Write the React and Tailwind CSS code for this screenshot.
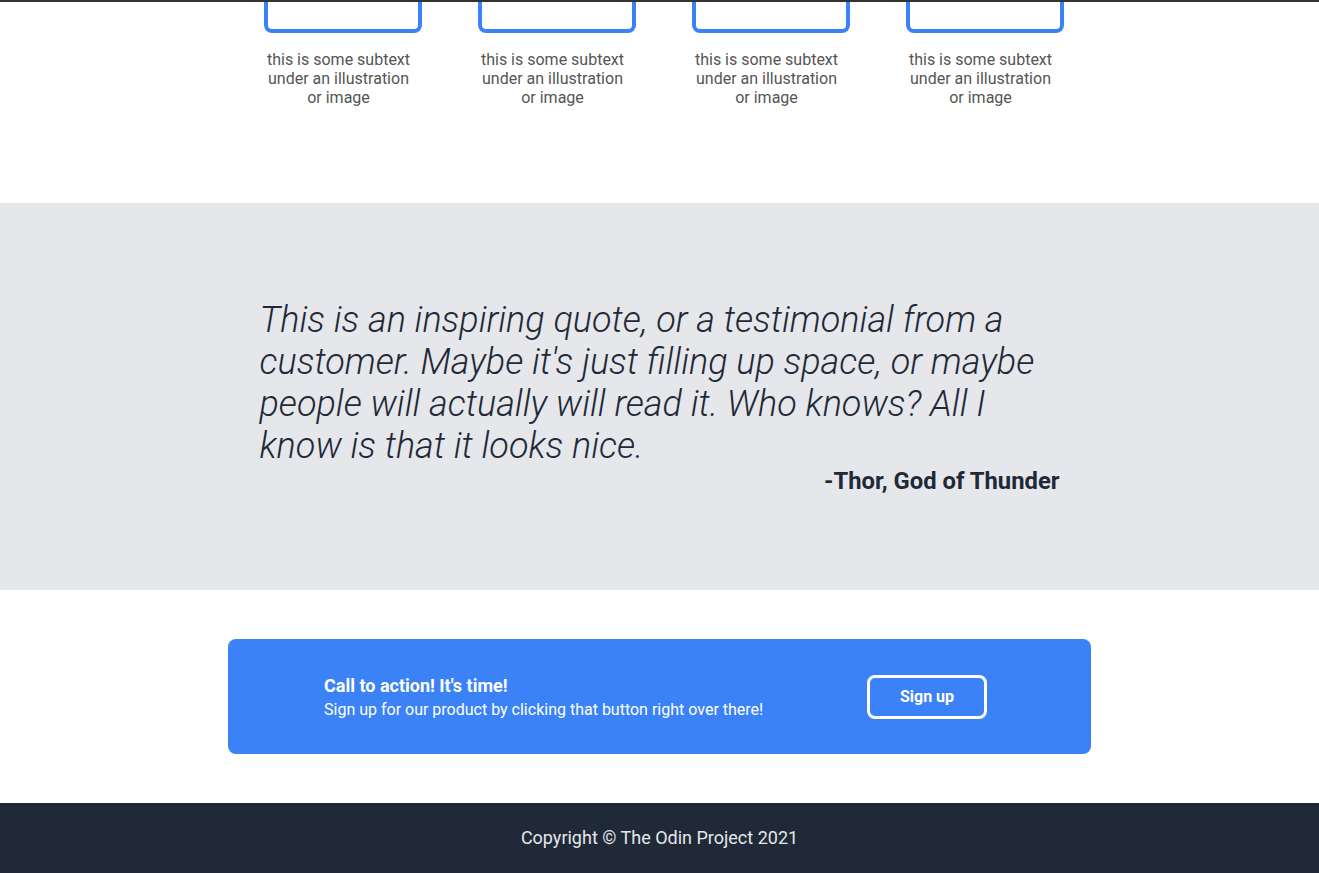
import React from 'react';

const items = [1, 2, 3, 4];

export default function App() {
    return (
        <div className="min-h-screen bg-white font-['Roboto',sans-serif]">
            <div className="h-[2px] bg-[#333]" />

            <section className="pb-[96px]">
                <div className="mx-auto flex w-[809px] justify-between pl-[9px]">
                    {items.map((i) => (
                        <div key={i} className="flex w-[158px] flex-col">
                            <div className="h-[31px] w-[158px] rounded-b-lg border-4 border-t-0 border-[#3b82f6]" />
                            <p className="mt-[17px] w-[149px] text-center text-base leading-[19px] text-[#555]">
                                this is some subtext under an illustration or image
                            </p>
                        </div>
                    ))}
                </div>
            </section>

            <section className="bg-[#e5e7eb] pt-[96px] pb-[95px]">
                <div className="mx-auto w-[800px] text-[#1f2937]">
                    <p className="text-[36px] font-light italic leading-[42px]">
                        This is an inspiring quote, or a testimonial from a customer. Maybe it's just filling up space, or maybe people will actually will read it. Who knows? All I know is that it looks nice.
                    </p>
                    <p className="text-right text-[23.8px] font-bold leading-[28px]">-Thor, God of Thunder</p>
                </div>
            </section>

            <section className="pt-[49px] pb-[49px]">
                <div className="mx-auto flex h-[115px] w-[863px] items-center justify-between rounded-lg bg-[#3b82f6] pl-[96px] pr-[104px] text-white">
                    <div className="pt-[2px]">
                        <p className="text-lg font-bold leading-6">Call to action! It's time!</p>
                        <p className="leading-6">Sign up for our product by clicking that button right over there!</p>
                    </div>
                    <button className="h-[44px] w-[120px] rounded-lg border-[3px] border-white font-bold text-white">Sign up</button>
                </div>
            </section>

            <footer className="flex h-[70px] items-center justify-center bg-[#1f2937] text-lg text-[#e5e7eb]">
                Copyright © The Odin Project 2021
            </footer>
        </div>
    );
}
